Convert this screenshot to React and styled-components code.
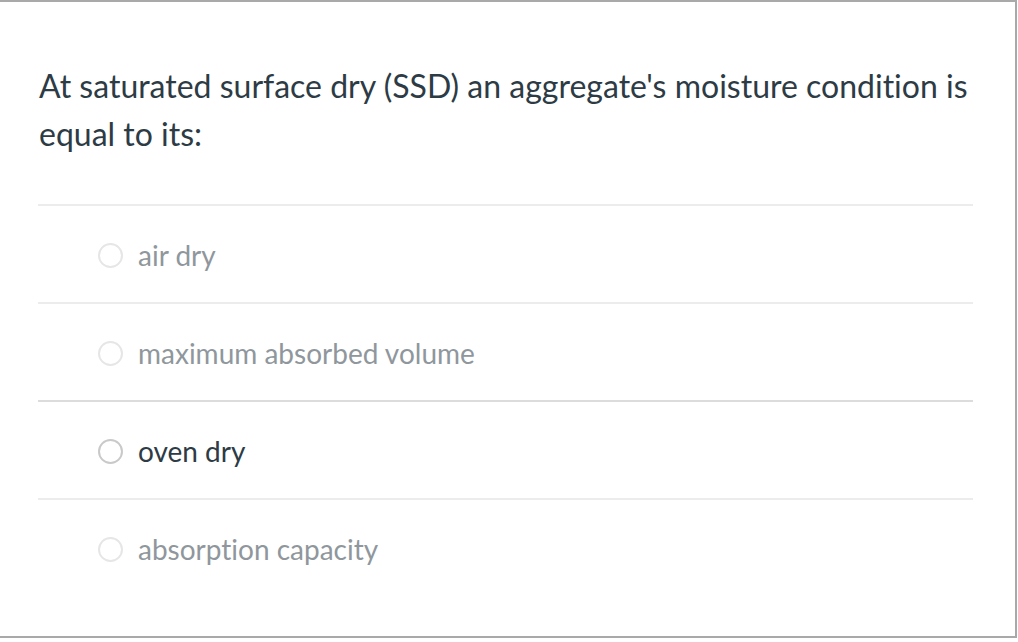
import React from 'react'
import styled, { createGlobalStyle } from 'styled-components'

const GlobalStyle = createGlobalStyle`
  html, body {
    margin: 0;
    padding: 0;
    background: #fff;
  }
  body {
    font-family: Lato, "Open Sans", "Liberation Sans", sans-serif;
    font-variant-ligatures: none;
  }
`

const answers = [
    { id: 'a1', text: 'air dry', faded: true },
    { id: 'a2', text: 'maximum absorbed volume', faded: true },
    { id: 'a3', text: 'oven dry', faded: false, strongLine: true },
    { id: 'a4', text: 'absorption capacity', faded: true },
]

const Frame = styled.div`
  box-sizing: border-box;
  width: 1017px;
  height: 638px;
  border: 2px solid #a9a9a9;
  border-left: none;
  padding: 60px 42px 0 38px;
  background: #fff;
`

const Question = styled.p`
  margin: 0 0 46px 1px;
  font-size: 32px;
  line-height: 48px;
  color: #2d3b45;
`

const AnswerList = styled.div`
  display: flex;
  flex-direction: column;
`

const AnswerRow = styled.label`
  display: flex;
  align-items: center;
  gap: 15px;
  height: 98px;
  box-sizing: border-box;
  padding: 2px 0 0 60px;
  border-top: 2px solid ${p => (p.$strong ? '#dcdcdc' : '#ececec')};
  cursor: pointer;
`

const Radio = styled.span`
  box-sizing: border-box;
  width: 25px;
  height: 25px;
  border-radius: 50%;
  border: 2px solid ${p => (p.$faded ? '#e6e6e6' : '#c9c9c9')};
  background: #fff;
  flex-shrink: 0;
`

const AnswerText = styled.span`
  font-size: 28px;
  color: ${p => (p.$faded ? '#8f979d' : '#2d3b45')};
`

export default function App() {
    return (
        <>
            <GlobalStyle />
            <Frame>
                <Question>
                    At saturated surface dry (SSD) an aggregate's moisture condition is equal to its:
                </Question>
                <AnswerList>
                    {answers.map(a => (
                        <AnswerRow key={a.id} $strong={a.strongLine}>
                            <Radio $faded={a.faded} />
                            <AnswerText $faded={a.faded}>{a.text}</AnswerText>
                        </AnswerRow>
                    ))}
                </AnswerList>
            </Frame>
        </>
    )
}
